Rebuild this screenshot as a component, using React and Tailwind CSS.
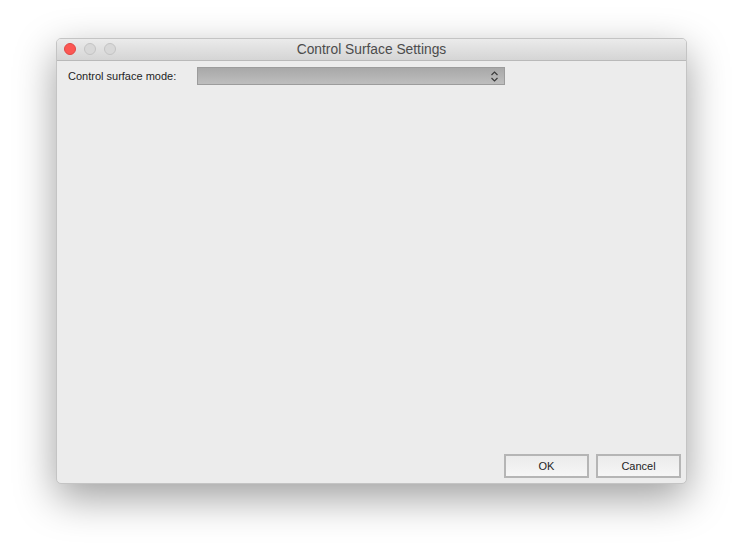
export default function App() {
  return (
    <div className="w-[742px] h-[557px] bg-white pl-[56px] pt-[38px]" style={{ fontFamily: '"Liberation Sans", Arial, sans-serif' }}>
      <div className="w-[631px] h-[446px] flex flex-col rounded-[5px] overflow-hidden border border-[#c4c4c4] shadow-[0_14px_40px_rgba(0,0,0,0.38)] bg-[#ececec]">
        <div className="relative h-[22px] shrink-0 flex items-center justify-center bg-gradient-to-b from-[#ebebeb] to-[#d5d5d5] border-b border-[#b9b9b9]">
          <div className="absolute left-[7px] top-[4px] flex gap-[8px]">
            <div className="w-[12px] h-[12px] rounded-full bg-[#fc5753] border border-[#df4744]" />
            <div className="w-[12px] h-[12px] rounded-full bg-[#d8d8d8] border border-[#c3c3c3]" />
            <div className="w-[12px] h-[12px] rounded-full bg-[#d8d8d8] border border-[#c3c3c3]" />
          </div>
          <span className="text-[13.8px] text-[#4c4c4c] leading-none">Control Surface Settings</span>
        </div>
        <div className="flex-1 flex flex-col pl-[11px] pr-[5px] pt-[6px] pb-[5px]">
          <div className="flex items-center h-[18px]">
            <span className="w-[129px] text-[11px] text-[#1e1e1e]">Control surface mode:</span>
            <div className="relative w-[308px] h-[18px] border border-[#9c9c9c] bg-gradient-to-b from-[#a8a8a8] to-[#bebebe]">
              <svg className="absolute right-[5px] top-[3px]" width="9" height="11" viewBox="0 0 9 11" fill="none" stroke="#3a3a3a" strokeWidth="1.2">
                <path d="M1.5 4 L4.5 1 L7.5 4" />
                <path d="M1.5 7 L4.5 10 L7.5 7" />
              </svg>
            </div>
          </div>
          <div className="flex-1" />
          <div className="flex justify-end gap-[7px]">
            <button className="w-[85px] h-[24px] border-2 border-[#b5b5b5] bg-gradient-to-b from-[#ebebeb] to-[#f6f6f6] text-[11px] text-[#1e1e1e]">OK</button>
            <button className="w-[85px] h-[24px] border-2 border-[#b5b5b5] bg-gradient-to-b from-[#ebebeb] to-[#f6f6f6] text-[11px] text-[#1e1e1e]">Cancel</button>
          </div>
        </div>
      </div>
    </div>
  );
}
